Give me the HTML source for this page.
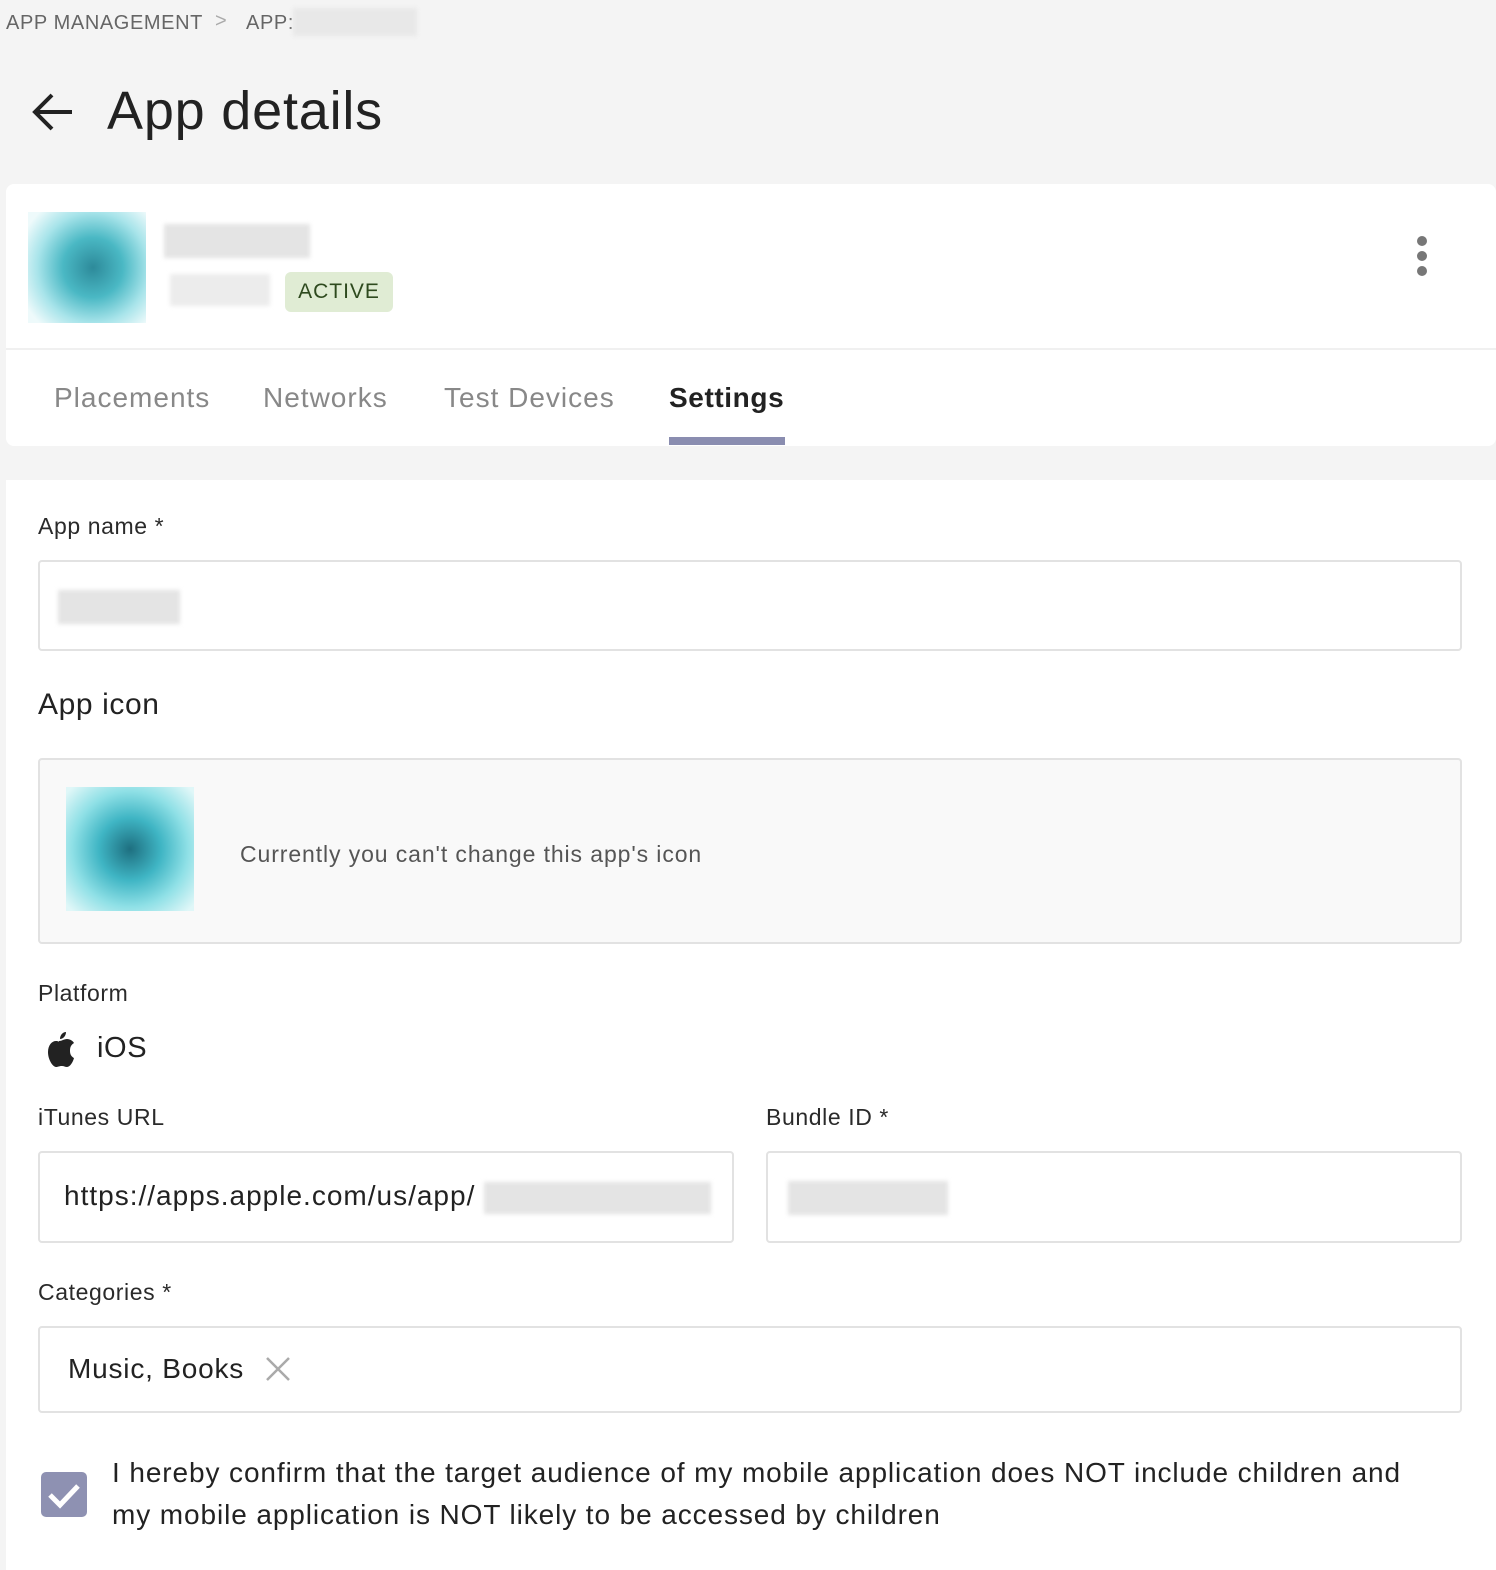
<!DOCTYPE html>
<html><head><meta charset="utf-8"><style>
*{box-sizing:border-box;margin:0;padding:0}
body{width:1496px;height:1570px;background:#f4f4f4;font-family:"Liberation Sans",sans-serif;color:#222;position:relative;overflow:hidden;letter-spacing:.6px}
.a{position:absolute}
.blur{background:#e4e4e4;filter:blur(2px)}
.inp{position:absolute;border:2px solid #e2e2e2;border-radius:4px;background:#fff}
.lbl{position:absolute;font-size:23px;color:#2a2a2a}
</style></head><body>
<div class="a" style="left:6px;top:12px;font-size:20px;color:#666">APP MANAGEMENT</div>
<div class="a" style="left:215px;top:10px;font-size:20px;color:#aaa">&gt;</div>
<div class="a" style="left:246px;top:12px;font-size:20px;color:#666">APP:</div>
<div class="a blur" style="left:293px;top:8px;width:124px;height:28px;background:#e8e8e8"></div>
<svg class="a" style="left:30px;top:90px" width="46" height="44" viewBox="0 0 46 44"><path d="M42 22H6M22 5L5 22l17 17" fill="none" stroke="#222" stroke-width="4"/></svg>
<div class="a" style="left:107px;top:80px;font-size:54px;color:#222;letter-spacing:.8px">App details</div>
<div class="a" style="left:6px;top:184px;width:1490px;height:262px;background:#fff;border-radius:8px"></div>
<div class="a" style="left:28px;top:212px;width:118px;height:111px;background:radial-gradient(circle at 55% 50%,#2d8a9a 0,#4ab8c4 35%,#a8e4ea 65%,#eefafb 90%)"></div>
<div class="a blur" style="left:164px;top:224px;width:146px;height:34px"></div>
<div class="a blur" style="left:170px;top:274px;width:100px;height:32px;background:#ececec"></div>
<div class="a" style="left:285px;top:272px;width:108px;height:40px;background:#e0ecd4;border-radius:6px;color:#2e4a1e;font-size:21px;letter-spacing:1px;text-align:center;line-height:40px">ACTIVE</div>
<div class="a" style="left:1417px;top:236px;width:10px;height:10px;border-radius:5px;background:#777;box-shadow:0 15px 0 #777,0 30px 0 #777"></div>
<div class="a" style="left:6px;top:348px;width:1490px;height:2px;background:#f0f0f0"></div>
<div class="a" style="left:54px;top:382px;font-size:28px;color:#888;letter-spacing:1px">Placements</div>
<div class="a" style="left:263px;top:382px;font-size:28px;color:#888;letter-spacing:1px">Networks</div>
<div class="a" style="left:444px;top:382px;font-size:28px;color:#888;letter-spacing:1px">Test Devices</div>
<div class="a" style="left:669px;top:382px;font-size:28px;color:#222;font-weight:bold;letter-spacing:.6px">Settings</div>
<div class="a" style="left:669px;top:437px;width:116px;height:8px;background:#8a8db0"></div>
<div class="a" style="left:6px;top:480px;width:1490px;height:1090px;background:#fff"></div>
<div class="lbl" style="left:38px;top:513px">App name *</div>
<div class="inp" style="left:38px;top:560px;width:1424px;height:91px"></div>
<div class="a blur" style="left:58px;top:590px;width:122px;height:34px"></div>
<div class="a" style="left:38px;top:688px;font-size:30px;color:#222">App icon</div>
<div class="inp" style="left:38px;top:758px;width:1424px;height:186px;background:#f9f9f9"></div>
<div class="a" style="left:66px;top:787px;width:128px;height:124px;background:radial-gradient(circle at 50% 50%,#1e6f80 0,#3fb5c4 35%,#8fe0e6 65%,#e0f7f8 95%)"></div>
<div class="a" style="left:240px;top:841px;font-size:23px;color:#555;letter-spacing:.9px">Currently you can't change this app's icon</div>
<div class="lbl" style="left:38px;top:980px">Platform</div>
<svg class="a" style="left:42px;top:1029px" width="36" height="40" viewBox="0 0 36 40"><path d="M24 3c0 4-3 7-6 7 0-4 3-7 6-7zM17 12c3 0 5-2 8-2 3 0 6 2 7 4-3 2-4 4-4 8 0 4 2 6 4 7-1 4-4 9-7 9-2 0-3-1-5-1-3 0-4 1-6 1-3 0-8-7-8-15 0-7 4-11 8-11 2 0 4 1 3 1z" fill="#222"/></svg>
<div class="a" style="left:97px;top:1032px;font-size:29px">iOS</div>
<div class="lbl" style="left:38px;top:1104px">iTunes URL</div>
<div class="lbl" style="left:766px;top:1104px">Bundle ID *</div>
<div class="inp" style="left:38px;top:1151px;width:696px;height:92px"></div>
<div class="a" style="left:64px;top:1180px;font-size:28px;letter-spacing:1px">https://apps.apple.com/us/app/</div>
<div class="a blur" style="left:484px;top:1182px;width:227px;height:32px"></div>
<div class="inp" style="left:766px;top:1151px;width:696px;height:92px"></div>
<div class="a blur" style="left:788px;top:1181px;width:160px;height:34px"></div>
<div class="lbl" style="left:38px;top:1279px">Categories *</div>
<div class="inp" style="left:38px;top:1326px;width:1424px;height:87px"></div>
<div class="a" style="left:68px;top:1353px;font-size:28px;letter-spacing:.8px">Music, Books</div>
<svg class="a" style="left:264px;top:1355px" width="28" height="28"><path d="M3 3l22 22M25 3L3 25" stroke="#aaa" stroke-width="2.5"/></svg>
<div class="a" style="left:41px;top:1472px;width:46px;height:45px;background:#8e91b2;border-radius:5px"></div>
<svg class="a" style="left:41px;top:1472px" width="46" height="45"><path d="M9 23l10 10 18-19" fill="none" stroke="#fff" stroke-width="5"/></svg>
<div class="a" style="left:112px;top:1452px;font-size:28px;line-height:42px;color:#222;width:1310px;letter-spacing:.9px">I hereby confirm that the target audience of my mobile application does NOT include children and my mobile application is NOT likely to be accessed by children</div>
</body></html>
